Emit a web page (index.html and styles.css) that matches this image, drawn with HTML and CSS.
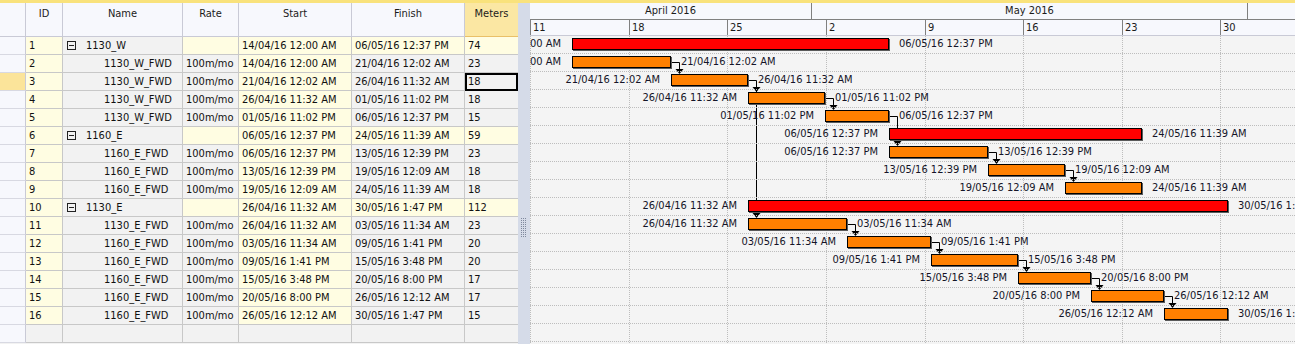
FILE: index.html
```html
<!DOCTYPE html>
<html>
<head>
<meta charset="utf-8">
<link rel="stylesheet" href="styles.css">
</head>
<body>
<div class="app">
  <div class="topline"></div>
  <div class="main">
    <div class="grid">
      <div class="hc rh"></div>
      <div class="hc">ID</div>
      <div class="hc">Name</div>
      <div class="hc">Rate</div>
      <div class="hc">Start</div>
      <div class="hc">Finish</div>
      <div class="hc sel">Meters</div>

      <div class="c rh"></div><div class="c y">1</div><div class="c g nm"><svg class="tg" width="9" height="9"><rect x=".5" y=".5" width="8" height="8" fill="none" stroke="#222"/><path d="M2 4.5h5" stroke="#222"/></svg>1130_W</div><div class="c y"></div><div class="c y">14/04/16 12:00 AM</div><div class="c y">06/05/16 12:37 PM</div><div class="c y">74</div>
      <div class="c rh"></div><div class="c y">2</div><div class="c g ch">1130_W_FWD</div><div class="c g">100m/mo</div><div class="c y">14/04/16 12:00 AM</div><div class="c g">21/04/16 12:02 AM</div><div class="c g">23</div>
      <div class="c rh cur"></div><div class="c y">3</div><div class="c g ch">1130_W_FWD</div><div class="c g">100m/mo</div><div class="c y">21/04/16 12:02 AM</div><div class="c g">26/04/16 11:32 AM</div><div class="c g focus">18</div>
      <div class="c rh"></div><div class="c y">4</div><div class="c g ch">1130_W_FWD</div><div class="c g">100m/mo</div><div class="c y">26/04/16 11:32 AM</div><div class="c g">01/05/16 11:02 PM</div><div class="c g">18</div>
      <div class="c rh"></div><div class="c y">5</div><div class="c g ch">1130_W_FWD</div><div class="c g">100m/mo</div><div class="c y">01/05/16 11:02 PM</div><div class="c g">06/05/16 12:37 PM</div><div class="c g">15</div>
      <div class="c rh"></div><div class="c y">6</div><div class="c g nm"><svg class="tg" width="9" height="9"><rect x=".5" y=".5" width="8" height="8" fill="none" stroke="#222"/><path d="M2 4.5h5" stroke="#222"/></svg>1160_E</div><div class="c y"></div><div class="c y">06/05/16 12:37 PM</div><div class="c y">24/05/16 11:39 AM</div><div class="c y">59</div>
      <div class="c rh"></div><div class="c y">7</div><div class="c g ch">1160_E_FWD</div><div class="c g">100m/mo</div><div class="c y">06/05/16 12:37 PM</div><div class="c g">13/05/16 12:39 PM</div><div class="c g">23</div>
      <div class="c rh"></div><div class="c y">8</div><div class="c g ch">1160_E_FWD</div><div class="c g">100m/mo</div><div class="c y">13/05/16 12:39 PM</div><div class="c g">19/05/16 12:09 AM</div><div class="c g">18</div>
      <div class="c rh"></div><div class="c y">9</div><div class="c g ch">1160_E_FWD</div><div class="c g">100m/mo</div><div class="c y">19/05/16 12:09 AM</div><div class="c g">24/05/16 11:39 AM</div><div class="c g">18</div>
      <div class="c rh"></div><div class="c y">10</div><div class="c g nm"><svg class="tg" width="9" height="9"><rect x=".5" y=".5" width="8" height="8" fill="none" stroke="#222"/><path d="M2 4.5h5" stroke="#222"/></svg>1130_E</div><div class="c y"></div><div class="c y">26/04/16 11:32 AM</div><div class="c y">30/05/16 1:47 PM</div><div class="c y">112</div>
      <div class="c rh"></div><div class="c y">11</div><div class="c g ch">1130_E_FWD</div><div class="c g">100m/mo</div><div class="c y">26/04/16 11:32 AM</div><div class="c g">03/05/16 11:34 AM</div><div class="c g">23</div>
      <div class="c rh"></div><div class="c y">12</div><div class="c g ch">1160_E_FWD</div><div class="c g">100m/mo</div><div class="c y">03/05/16 11:34 AM</div><div class="c g">09/05/16 1:41 PM</div><div class="c g">20</div>
      <div class="c rh"></div><div class="c y">13</div><div class="c g ch">1160_E_FWD</div><div class="c g">100m/mo</div><div class="c y">09/05/16 1:41 PM</div><div class="c g">15/05/16 3:48 PM</div><div class="c g">20</div>
      <div class="c rh"></div><div class="c y">14</div><div class="c g ch">1160_E_FWD</div><div class="c g">100m/mo</div><div class="c y">15/05/16 3:48 PM</div><div class="c g">20/05/16 8:00 PM</div><div class="c g">17</div>
      <div class="c rh"></div><div class="c y">15</div><div class="c g ch">1160_E_FWD</div><div class="c g">100m/mo</div><div class="c y">20/05/16 8:00 PM</div><div class="c g">26/05/16 12:12 AM</div><div class="c g">17</div>
      <div class="c rh"></div><div class="c y">16</div><div class="c g ch">1160_E_FWD</div><div class="c g">100m/mo</div><div class="c y">26/05/16 12:12 AM</div><div class="c g">30/05/16 1:47 PM</div><div class="c g">15</div>
      <div class="c rh"></div><div class="c g"></div><div class="c g"></div><div class="c g"></div><div class="c g"></div><div class="c g"></div><div class="c g"></div>
    </div>

    <div class="splitter">
      <svg class="grip" width="6" height="19"><defs><pattern id="dots" width="2" height="2" patternUnits="userSpaceOnUse"><rect width="1" height="1" fill="#7f889c"/></pattern></defs><rect width="6" height="19" fill="url(#dots)"/></svg>
    </div>

    <div class="gantt">
      <div class="months">
        <div class="month" style="width:282px">April 2016</div>
        <div class="month" style="width:436px">May 2016</div>
        <div class="month last"></div>
      </div>
      <div class="days">
        <div class="day" style="width:99px">11</div>
        <div class="day" style="width:98px">18</div>
        <div class="day" style="width:99px">25</div>
        <div class="day" style="width:99px">2</div>
        <div class="day" style="width:98px">9</div>
        <div class="day" style="width:99px">16</div>
        <div class="day" style="width:98px">23</div>
        <div class="day" style="width:99px">30</div>
      </div>
      <div class="gbody">
        <svg class="links" width="765" height="310">
          <g stroke="#bdbdbd" stroke-dasharray="1 1">
            <path d="M0.5 0V310M99.5 0V310M197.5 0V310M296.5 0V310M395.5 0V310M493.5 0V310M592.5 0V310M690.5 0V310"/>
          </g>
          <g stroke="#000" fill="none">
            <path d="M141 26.5H149.5V37"/>
            <path d="M218 44.5H226.5V181"/>
            <path d="M295 62.5H303.5V73"/>
            <path d="M359 80.5H367.5V109"/>
            <path d="M458 116.5H466.5V127"/>
            <path d="M535 134.5H543.5V145"/>
            <path d="M317 188.5H325.5V199"/>
            <path d="M401 206.5H409.5V217"/>
            <path d="M488 224.5H496.5V235"/>
            <path d="M561 242.5H569.5V253"/>
            <path d="M634 260.5H642.5V271"/>
          </g>
          <g fill="#000">
            <path d="M145.5 33H153.5L149.5 38Z"/>
            <path d="M222.5 51H230.5L226.5 56Z"/>
            <path d="M222.5 177H230.5L226.5 182Z"/>
            <path d="M299.5 69H307.5L303.5 74Z"/>
            <path d="M363.5 105H371.5L367.5 110Z"/>
            <path d="M462.5 123H470.5L466.5 128Z"/>
            <path d="M539.5 141H547.5L543.5 146Z"/>
            <path d="M321.5 195H329.5L325.5 200Z"/>
            <path d="M405.5 213H413.5L409.5 218Z"/>
            <path d="M492.5 231H500.5L496.5 236Z"/>
            <path d="M565.5 249H573.5L569.5 254Z"/>
            <path d="M638.5 267H646.5L642.5 272Z"/>
          </g>
        </svg>
        <div class="grow"><div class="bar sum" style="left:42px;width:317px"><span class="lab l">14/04/16 12:00 AM</span><span class="lab r">06/05/16 12:37 PM</span></div></div>
        <div class="grow"><div class="bar" style="left:42px;width:99px"><span class="lab l">14/04/16 12:00 AM</span><span class="lab r">21/04/16 12:02 AM</span></div></div>
        <div class="grow"><div class="bar" style="left:141px;width:77px"><span class="lab l">21/04/16 12:02 AM</span><span class="lab r">26/04/16 11:32 AM</span></div></div>
        <div class="grow"><div class="bar" style="left:218px;width:77px"><span class="lab l">26/04/16 11:32 AM</span><span class="lab r">01/05/16 11:02 PM</span></div></div>
        <div class="grow"><div class="bar" style="left:295px;width:64px"><span class="lab l">01/05/16 11:02 PM</span><span class="lab r">06/05/16 12:37 PM</span></div></div>
        <div class="grow"><div class="bar sum" style="left:359px;width:253px"><span class="lab l">06/05/16 12:37 PM</span><span class="lab r">24/05/16 11:39 AM</span></div></div>
        <div class="grow"><div class="bar" style="left:359px;width:99px"><span class="lab l">06/05/16 12:37 PM</span><span class="lab r">13/05/16 12:39 PM</span></div></div>
        <div class="grow"><div class="bar" style="left:458px;width:77px"><span class="lab l">13/05/16 12:39 PM</span><span class="lab r">19/05/16 12:09 AM</span></div></div>
        <div class="grow"><div class="bar" style="left:535px;width:77px"><span class="lab l">19/05/16 12:09 AM</span><span class="lab r">24/05/16 11:39 AM</span></div></div>
        <div class="grow"><div class="bar sum" style="left:218px;width:480px"><span class="lab l">26/04/16 11:32 AM</span><span class="lab r">30/05/16 1:47 PM</span></div></div>
        <div class="grow"><div class="bar" style="left:218px;width:99px"><span class="lab l">26/04/16 11:32 AM</span><span class="lab r">03/05/16 11:34 AM</span></div></div>
        <div class="grow"><div class="bar" style="left:317px;width:84px"><span class="lab l">03/05/16 11:34 AM</span><span class="lab r">09/05/16 1:41 PM</span></div></div>
        <div class="grow"><div class="bar" style="left:401px;width:87px"><span class="lab l">09/05/16 1:41 PM</span><span class="lab r">15/05/16 3:48 PM</span></div></div>
        <div class="grow"><div class="bar" style="left:488px;width:73px"><span class="lab l">15/05/16 3:48 PM</span><span class="lab r">20/05/16 8:00 PM</span></div></div>
        <div class="grow"><div class="bar" style="left:561px;width:73px"><span class="lab l">20/05/16 8:00 PM</span><span class="lab r">26/05/16 12:12 AM</span></div></div>
        <div class="grow"><div class="bar" style="left:634px;width:64px"><span class="lab l">26/05/16 12:12 AM</span><span class="lab r">30/05/16 1:47 PM</span></div></div>
        <div class="grow"></div>
      </div>
    </div>
  </div>
</div>
</body>
</html>
```

FILE: styles.css
```css
* { box-sizing: border-box; }
html, body { margin: 0; padding: 0; }
body {
  width: 1295px;
  height: 344px;
  overflow: hidden;
  background: #f4f4f4;
  font-family: "DejaVu Sans Condensed", "DejaVu Sans", sans-serif;
  font-stretch: semi-condensed;
  font-size: 11px;
  color: #111;
}
.app { display: flex; flex-direction: column; height: 344px; }
.topline { height: 3px; background: #f9e27c; border-bottom: 1px solid #f9e27c; flex: none; }
.main { display: flex; flex: 1; min-height: 0; }

.grid {
  width: 518px;
  flex: none;
  display: grid;
  grid-template-columns: 26px 37px 120px 56px 113px 113px 53px;
  grid-auto-rows: 18px;
  grid-template-rows: 34px;
  align-content: start;
  background: #f2f2f2;
}
.hc {
  background: #f7f8fd;
  border-right: 1px solid #c9cad6;
  border-bottom: 1px solid #c9cad6;
  text-align: center;
  padding-top: 4px;
  color: #1b1b1b;
}
.hc.sel { background: #fbe7a3; border-bottom-color: #e9c068; border-right: none; }
.c {
  border-right: 1px solid #c8c8c8;
  border-bottom: 1px solid #c8c8c8;
  padding-left: 3px;
  line-height: 17px;
  white-space: nowrap;
  overflow: hidden;
}
.c.rh { background: #f7f8fd; border-right-color: #c9cad6; border-bottom-color: #d8d9e2; }
.c.rh.cur { background: #fbe49a; }
.c.y { background: #fffde2; }
.c.g { background: #f2f2f2; }
.c:nth-child(7n) { border-right: none; }
.c.nm { display: flex; align-items: center; padding-left: 4px; }
.tg { flex: none; margin-right: 10px; }
.c.ch { padding-left: 41px; }
.c.focus { outline: 2px solid #000; outline-offset: -2px; }

.splitter {
  width: 12px;
  flex: none;
  background: #d5dbe8;
  display: flex;
  flex-direction: column;
  align-items: center;
}
.grip { margin-top: 215px; }

.gantt { flex: 1; min-width: 0; display: flex; flex-direction: column; overflow: hidden; }
.months { display: flex; height: 17px; flex: none; background: #f7f8fd; border-bottom: 1px solid #808080; }
.month { flex: none; text-align: center; border-right: 1px solid #808080; line-height: 16px; color: #1b1b1b; }
.month.last { flex: 1; border-right: none; }
.days { display: flex; height: 16px; flex: none; background: #f7f8fd; border-bottom: 1px solid #c9cad6; }
.day { flex: none; border-left: 1px solid #808080; padding-left: 2px; line-height: 15px; color: #1b1b1b; }

.gbody { position: relative; flex: 1; background: #f4f4f4; }
.links { position: absolute; left: 0; top: 0; }
.grow { position: relative; height: 18px; border-bottom: 1px dotted #bdbdbd; }
.bar {
  position: absolute;
  top: 2px;
  height: 12px;
  background: #ff8000;
  border: 1px solid #000;
  box-shadow: 1px 1px 0 #5a5a5a;
}
.bar.sum { background: #ff0000; }
.lab {
  position: absolute;
  top: -2px;
  line-height: 14px;
  white-space: nowrap;
  color: #141428;
}
.lab.l { right: calc(100% + 12px); }
.lab.r { left: calc(100% + 11px); }
```
